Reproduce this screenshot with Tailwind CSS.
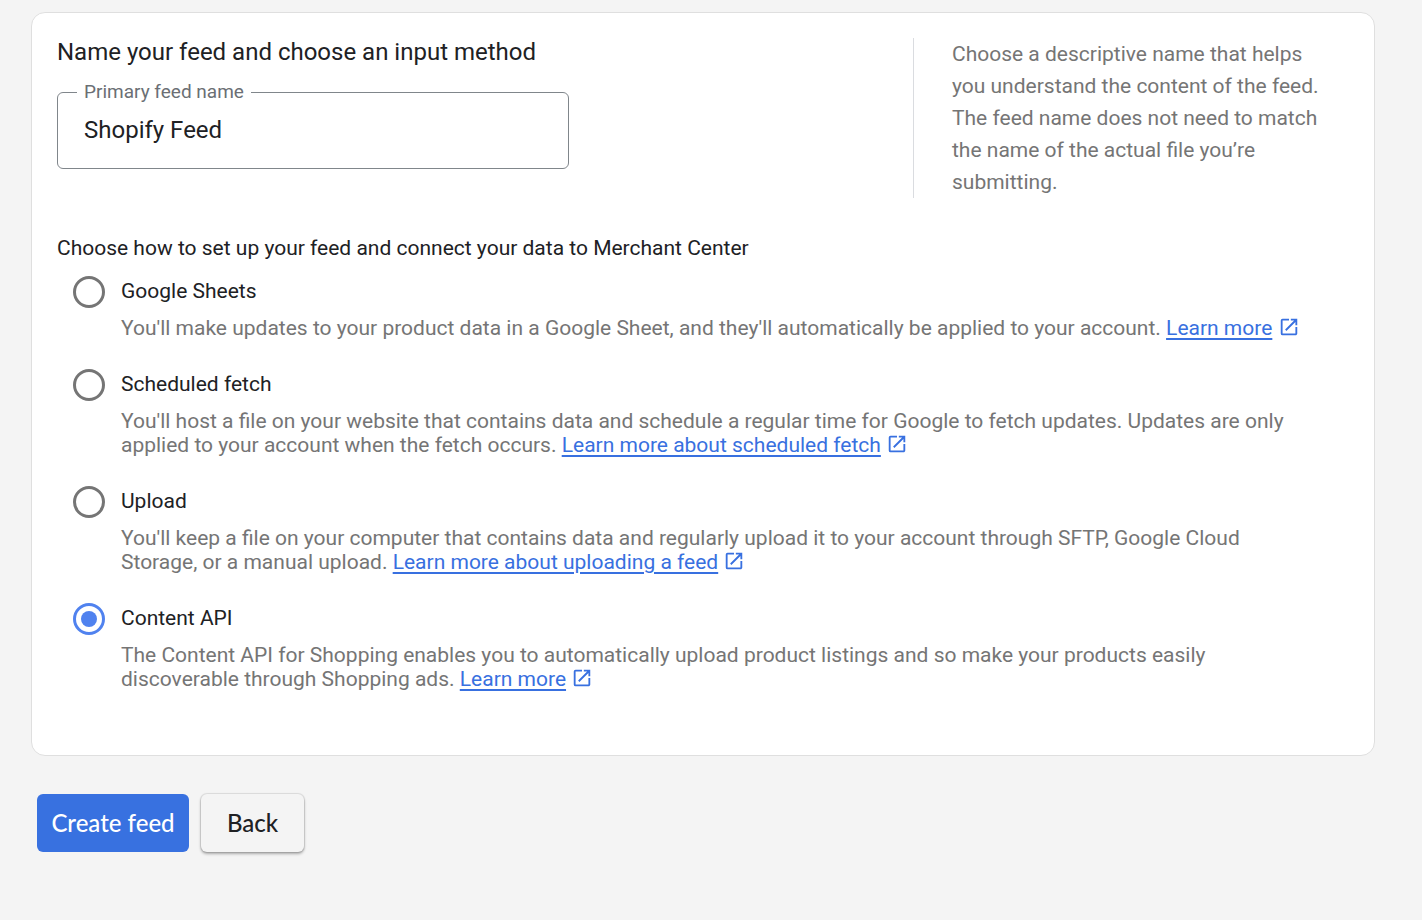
<!DOCTYPE html>
<html lang="en">

<head>
    <meta charset="UTF-8">
    <meta name="viewport" content="width=device-width, initial-scale=1.0">
    <title>Create feed</title>
    <script src="https://cdn.jsdelivr.net/npm/@tailwindcss/browser@4"></script>
</head>

<body class="min-h-screen bg-[#f4f4f4] font-[Roboto,sans-serif] text-[#202124]">

    <!-- Icon shared by the help links -->
    <svg xmlns="http://www.w3.org/2000/svg" class="hidden">
        <symbol id="open-in-new" viewBox="0 0 24 24">
            <path fill="currentColor" d="M19 19H5V5h7V3H5a2 2 0 0 0-2 2v14a2 2 0 0 0 2 2h14c1.100 0 2-.9 2-2v-7h-2v7zM14 3v2h3.590l-9.830 9.830 1.410 1.410L19 6.410V10h2V3h-7z" />
        </symbol>
    </svg>

    <form class="pt-3 pr-[47px] pl-[31px]">
        <!-- Card -->
        <div class="rounded-[14px] border border-[#dfdfdf] bg-white px-[25px] pt-[25px] pb-16">
            <div class="flex items-start justify-between">
                <div class="w-[512px]">
                    <h1 class="text-[24px] leading-7">Name your feed and choose an input method</h1>

                    <!-- Outlined text field -->
                    <fieldset class="mt-3 h-[91px] rounded-md border border-[#80868b] pl-[19px]">
                        <legend class="px-[7px] text-[19px] leading-7 text-[#6b6f74]">
                            <label for="feed-name">Primary feed name</label>
                        </legend>
                        <input id="feed-name" type="text" value="Shopify Feed" class="h-12 w-full px-[7px] text-[24px] leading-7 outline-none">
                    </fieldset>
                </div>

                <p class="w-[436px] border-l border-[#dadce0] pr-6 pl-[38px] text-[21px] leading-8 text-[#757575]">
                    Choose a descriptive name that helps you understand the content of the feed. The feed name does not need to match the name of the actual file you’re submitting.
                </p>
            </div>

            <h2 id="method-title" class="mt-9 text-[21px] leading-7">Choose how to set up your feed and connect your data to Merchant Center</h2>

            <!-- Input methods -->
            <div role="radiogroup" aria-labelledby="method-title" class="mt-3.5 flex flex-col gap-[29px] pr-10 pl-4">
                <div class="grid grid-cols-[32px_1fr] gap-x-4 gap-y-2">
                    <input id="sheets" type="radio" name="method" class="size-8 appearance-none rounded-full border-3 border-[#757575] bg-clip-content p-[5px] checked:border-[#5082ef] checked:bg-[#5082ef]">
                    <label for="sheets" class="text-[21px] leading-[30px]">Google Sheets</label>
                    <p class="col-start-2 text-[21px] leading-6 text-[#757575]">
                        You'll make updates to your product data in a Google Sheet, and they'll automatically be applied to your account.
                        <a href="#" class="text-[#3870e0]"><span class="underline decoration-2 underline-offset-3">Learn more</span> <svg class="-mt-1 inline size-[22px]"><use href="#open-in-new" /></svg></a>
                    </p>
                </div>

                <div class="grid grid-cols-[32px_1fr] gap-x-4 gap-y-2">
                    <input id="fetch" type="radio" name="method" class="size-8 appearance-none rounded-full border-3 border-[#757575] bg-clip-content p-[5px] checked:border-[#5082ef] checked:bg-[#5082ef]">
                    <label for="fetch" class="text-[21px] leading-[30px]">Scheduled fetch</label>
                    <p class="col-start-2 text-[21px] leading-6 text-[#757575]">
                        You'll host a file on your website that contains data and schedule a regular time for Google to fetch updates. Updates are only applied to your account when the fetch occurs.
                        <a href="#" class="text-[#3870e0]"><span class="underline decoration-2 underline-offset-3">Learn more about scheduled fetch</span> <svg class="-mt-1 inline size-[22px]"><use href="#open-in-new" /></svg></a>
                    </p>
                </div>

                <div class="grid grid-cols-[32px_1fr] gap-x-4 gap-y-2">
                    <input id="upload" type="radio" name="method" class="size-8 appearance-none rounded-full border-3 border-[#757575] bg-clip-content p-[5px] checked:border-[#5082ef] checked:bg-[#5082ef]">
                    <label for="upload" class="text-[21px] leading-[30px]">Upload</label>
                    <p class="col-start-2 text-[21px] leading-6 text-[#757575]">
                        You'll keep a file on your computer that contains data and regularly upload it to your account through SFTP, Google Cloud Storage, or a manual upload.
                        <a href="#" class="text-[#3870e0]"><span class="underline decoration-2 underline-offset-3">Learn more about uploading a feed</span> <svg class="-mt-1 inline size-[22px]"><use href="#open-in-new" /></svg></a>
                    </p>
                </div>

                <div class="grid grid-cols-[32px_1fr] gap-x-4 gap-y-2">
                    <input id="api" type="radio" name="method" checked class="size-8 appearance-none rounded-full border-3 border-[#757575] bg-clip-content p-[5px] checked:border-[#5082ef] checked:bg-[#5082ef]">
                    <label for="api" class="text-[21px] leading-[30px]">Content API</label>
                    <p class="col-start-2 text-[21px] leading-6 text-[#757575]">
                        The Content API for Shopping enables you to automatically upload product listings and so make your products easily discoverable through Shopping ads.
                        <a href="#" class="text-[#3870e0]"><span class="underline decoration-2 underline-offset-3">Learn more</span> <svg class="-mt-1 inline size-[22px]"><use href="#open-in-new" /></svg></a>
                    </p>
                </div>
            </div>
        </div>

        <!-- Actions -->
        <div class="mt-[38px] flex gap-3 pl-1.5 font-[Lato,sans-serif] text-[24px] font-medium">
            <button type="submit" class="h-[58px] w-[152px] rounded-md bg-[#3871e0] text-white">Create feed</button>
            <button type="button" class="h-[58px] w-[103px] rounded-md bg-[#f4f4f4] shadow-[0_0_1px_1px_rgba(0,0,0,0.1),0_2px_3px_rgba(0,0,0,0.3)]">Back</button>
        </div>
    </form>

</body>

</html>
